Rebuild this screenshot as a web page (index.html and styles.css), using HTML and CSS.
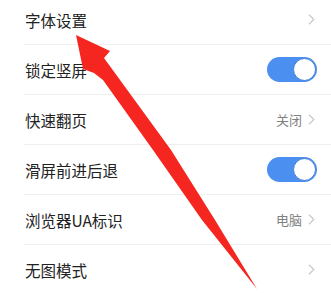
FILE: index.html
```html
<!DOCTYPE html>
<html lang="zh-CN">
<head>
<meta charset="utf-8">
<link rel="stylesheet" href="styles.css">
</head>
<body>
<div class="page">
  <ul class="list">
    <li class="row"><span class="label">字体设置</span><span class="extra"><svg class="chev" viewBox="0 0 7 11"><path d="M1 0.8 L5.8 5.5 L1 10.2"/></svg></span></li>
    <li class="row"><span class="label">锁定竖屏</span><span class="toggle on"><span class="knob"></span></span></li>
    <li class="row"><span class="label">快速翻页</span><span class="extra"><span class="value">关闭</span><svg class="chev" viewBox="0 0 7 11"><path d="M1 0.8 L5.8 5.5 L1 10.2"/></svg></span></li>
    <li class="row"><span class="label">滑屏前进后退</span><span class="toggle on"><span class="knob"></span></span></li>
    <li class="row"><span class="label">浏览器UA标识</span><span class="extra"><span class="value">电脑</span><svg class="chev" viewBox="0 0 7 11"><path d="M1 0.8 L5.8 5.5 L1 10.2"/></svg></span></li>
    <li class="row"><span class="label">无图模式</span><span class="extra"><svg class="chev" viewBox="0 0 7 11"><path d="M1 0.8 L5.8 5.5 L1 10.2"/></svg></span></li>
  </ul>
  <svg class="arrow" viewBox="0 0 331 293" width="331" height="293">
    <polygon points="76,35 110,51 104,58 171,150 215,220 257,289 202,220 153,150 103,80 94,73 83,69"/>
  </svg>
</div>
</body>
</html>
```
FILE: styles.css
```css
html, body {
  margin: 0;
  padding: 0;
  background: #ffffff;
}
.page {
  position: relative;
  width: 331px;
  height: 293px;
  overflow: hidden;
  font-family: "Noto Sans CJK SC", "Noto Sans", sans-serif;
}
.list {
  list-style: none;
  margin: -5px 0 0 24px;
  padding: 0;
}
.row {
  height: 49px;
  border-bottom: 1px solid #efefef;
  display: flex;
  align-items: center;
  justify-content: space-between;
  padding-right: 14px;
}
.label {
  font-size: 15.5px;
  color: #222222;
  padding-left: 1px;
}
.extra {
  display: flex;
  align-items: center;
  gap: 6px;
  padding-right: 2px;
}
.value {
  font-size: 13px;
  color: #808080;
}
.chev {
  width: 7px;
  height: 11px;
  fill: none;
  stroke: #c8c8c8;
  stroke-width: 1.2;
}
.toggle {
  width: 50px;
  height: 25px;
  border-radius: 13px;
  background: #4b8ff0;
  position: relative;
  box-sizing: border-box;
}
.knob {
  position: absolute;
  right: 1px;
  top: 1px;
  width: 23px;
  height: 23px;
  border-radius: 50%;
  background: #ffffff;
  box-sizing: border-box;
  border: 1px solid #3f7fd8;
}
.arrow {
  position: absolute;
  left: 0;
  top: 0;
  pointer-events: none;
}
.arrow polygon {
  fill: #f5261f;
}
```
